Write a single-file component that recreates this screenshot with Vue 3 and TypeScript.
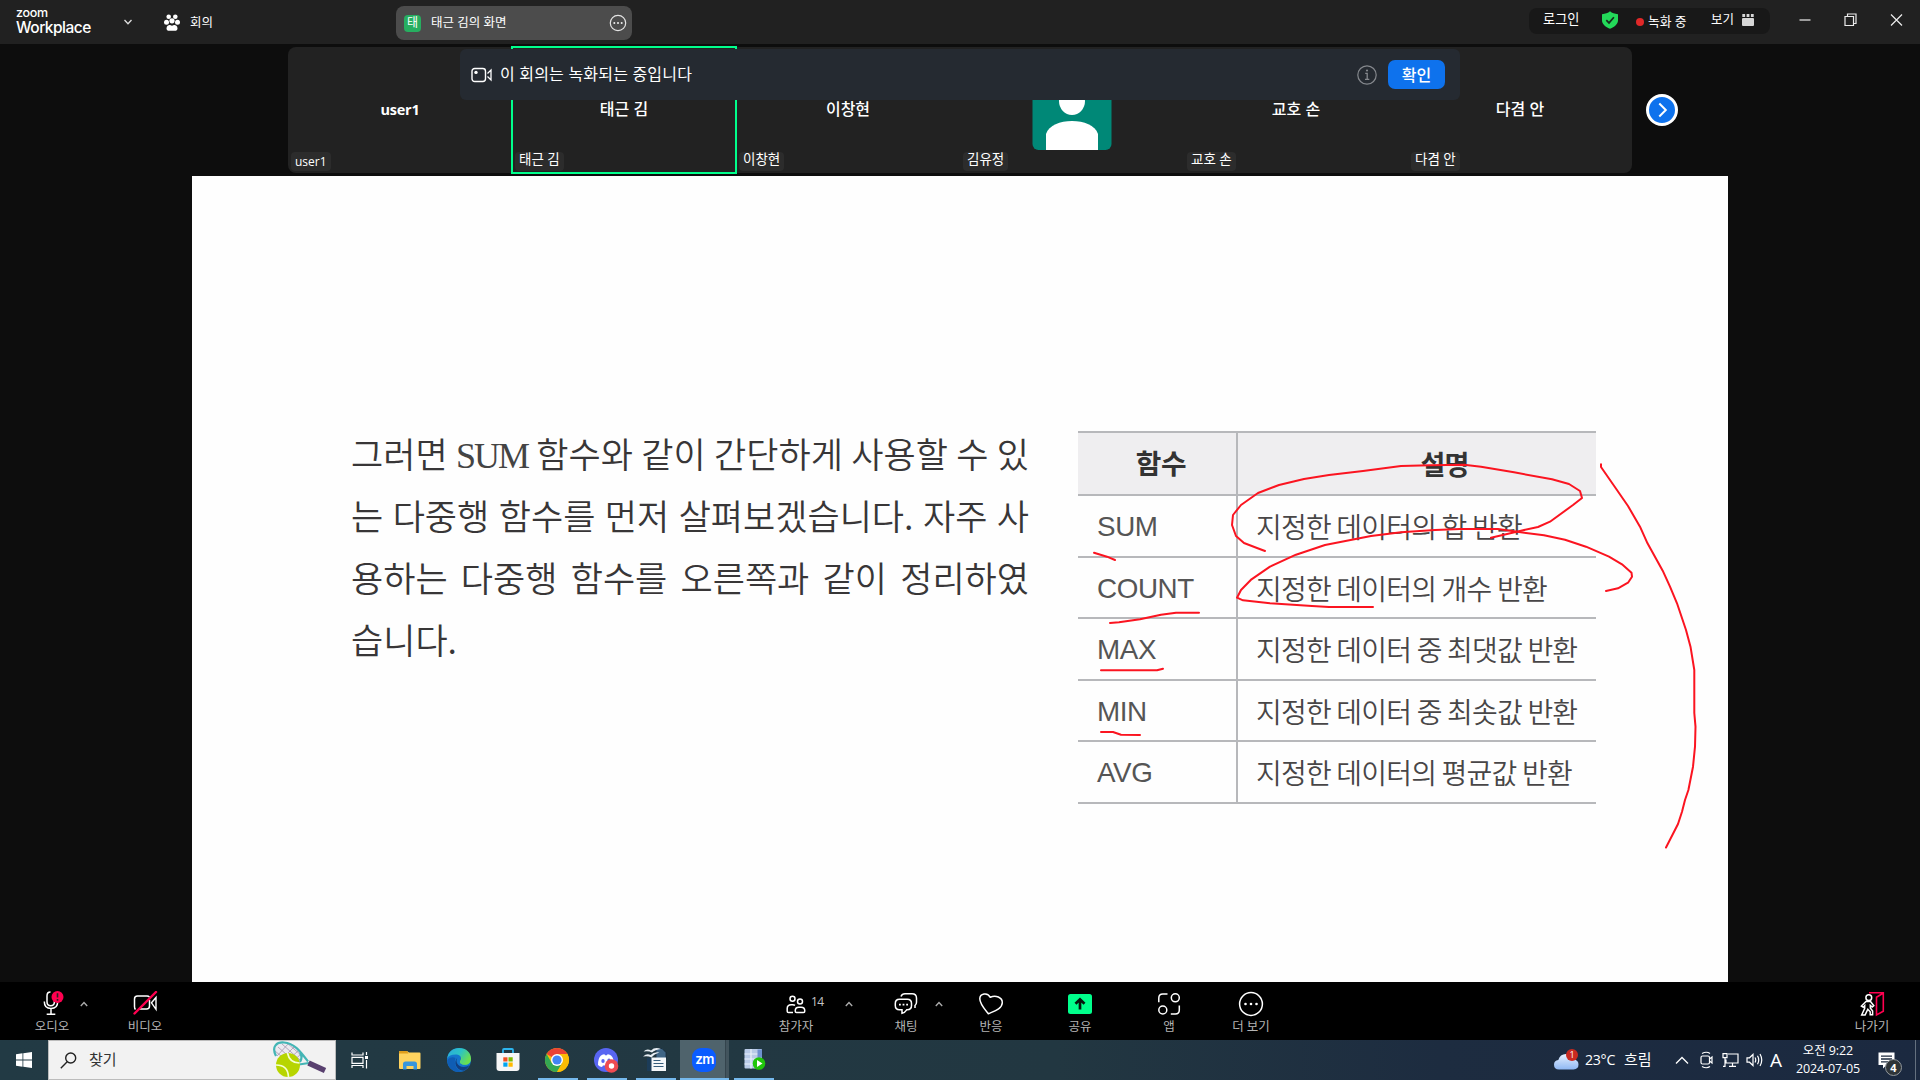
<script setup lang="ts">
interface Tile { name: string; bold?: boolean; active?: boolean; avatar?: boolean }
interface Row { fn: string; desc: string }

const tiles: Tile[] = [
  { name: 'user1', bold: true },
  { name: '태근 김', active: true },
  { name: '이창현' },
  { name: '김유정', avatar: true },
  { name: '교호 손' },
  { name: '다겸 안' },
]
const rows: Row[] = [
  { fn: 'SUM', desc: '지정한 데이터의 합 반환' },
  { fn: 'COUNT', desc: '지정한 데이터의 개수 반환' },
  { fn: 'MAX', desc: '지정한 데이터 중 최댓값 반환' },
  { fn: 'MIN', desc: '지정한 데이터 중 최솟값 반환' },
  { fn: 'AVG', desc: '지정한 데이터의 평균값 반환' },
]
const strokes: string[] = [
  '1265,551 1257,548 1244,543 1236,536 1232,525 1233,515 1241,505 1258,493 1279,485 1304,479 1329,475 1363,471 1401,466 1430,465.3 1464,464.7 1481,466.7 1514,472.3 1552,479.3 1569,484 1580,491 1582,498 1573,505 1550,521.7 1538,527 1521,530.7 1491,537.7',
  '1606,591 1618,588.3 1628,582.7 1632,576.7 1631.5,572.7 1622,564.3 1609,556.7 1586,546.7 1565,539.7 1544,535.3 1519,532 1498,529 1460,529 1435,530 1401,532.3 1371,536 1325,545 1296,554.7 1270,566.7 1251.5,579.3 1241,590 1237,597.7 1243,600.3 1270,603.3 1312,606 1329,607 1373,607',
  '1094,552.7 1107,556.7 1115,560',
  '1110,623 1119,622.300 1140,619.3 1161,614.7 1176,612.7 1199,612.7',
  '1101,670.3 1157,670.3 1163,668.7',
  '1101,732 1113,732 1121,734.7 1140,735',
  '1601,464.3 1601,467 1614.7,486.7 1628,506 1640,526.7 1647.5,543.3 1662.7,570.7 1670,586.7 1677,603.3 1686,630 1690.5,646.7 1694.3,670 1694.3,713 1695.5,726.7 1695,746.7 1693,766.7 1688.4,790 1685,800 1682,811.7 1678,824 1666,847.5',
]
</script>

<template>
  <div class="screen">
    <header class="titlebar">
      <div class="brand"><span class="zoom">zoom</span><span class="wp">Workplace</span></div>
      <svg class="brand-chev" width="10" height="8" viewBox="0 0 10 8"><path d="M1.5 2 5 5.8 8.5 2" fill="none" stroke="#ddd" stroke-width="1.3" /></svg>
      <svg class="paw" width="16" height="18" viewBox="0 0 16 18" fill="#fff"><circle cx="4.7" cy="2.8" r="2.3" /><circle cx="11.3" cy="2.8" r="2.3" /><circle cx="8" cy="6.8" r="2.6" /><circle cx="2.5" cy="8.2" r="2.5" /><circle cx="13.5" cy="8.2" r="2.5" /><path d="M2.5 14.4c0-2.4 2-3.3 3-3.3.9 0 1.300.7 2.500.7s1.600-.7 2.500-.7c1 0 3 .9 3 3.300 0 1.800-1.200 2.300-2.500 2.300h-6c-1.300 0-2.500-.5-2.500-2.300z" /></svg>
      <span class="tab">회의</span>
      <div class="share-tab">
        <span class="share-badge">태</span>
        <span class="share-name">태근 김의 화면</span>
        <svg width="18" height="18" viewBox="0 0 18 18"><circle cx="9" cy="9" r="7.7" fill="none" stroke="#e4e4e4" stroke-width="1.200" /><circle cx="5.300" cy="9" r="1" fill="#eee" /><circle cx="9" cy="9" r="1" fill="#eee" /><circle cx="12.700" cy="9" r="1" fill="#eee" /></svg>
      </div>
      <div class="status">
        <span class="login">로그인</span>
        <svg class="shield" width="18" height="18" viewBox="0 0 18 18"><path d="M9 .3c2 1.700 4.700 2.700 8 2.900v6.300c0 4.200-4.600 6.900-8 8.300-3.400-1.400-8-4.100-8-8.300V3.200C4.300 3 7 2 9 .3z" fill="#23d959" /><path d="M5.300 9.200l2.700 2.700 4.900-5.700" fill="none" stroke="#162b1c" stroke-width="1.700" /></svg>
        <i class="rec-dot"></i>
        <span class="rec">녹화 중</span>
        <span class="view">보기</span>
        <svg class="view-ic" width="12" height="12" viewBox="0 0 12 12" fill="#d6d6d6"><rect x="0" y="4" width="12" height="8" rx="1" /><rect x=".3" y="0" width="2.800" height="3" /><rect x="4.600" y="0" width="2.800" height="3" /><rect x="8.900" y="0" width="2.800" height="3" /></svg>
      </div>
      <div class="winbtns">
        <svg width="12" height="14" viewBox="0 0 12 14"><path d="M.5 7h11" stroke="#bdbdbd" stroke-width="1.600" /></svg>
        <svg width="13" height="14" viewBox="0 0 13 14"><path d="M1 3.500h8.500v9H1zM3.500 3.500V1H12v9.500H9.500" fill="none" stroke="#ececec" stroke-width="1.200" /></svg>
        <svg width="13" height="14" viewBox="0 0 13 14"><path d="M1 1.500l11 11M12 1.500l-11 11" stroke="#ececec" stroke-width="1.200" /></svg>
      </div>
    </header>

    <section class="gallery">
      <div class="strip">
        <div v-for="t in tiles" :key="t.name" class="tile" :class="{ active: t.active }">
          <svg v-if="t.avatar" class="avatar" width="80" height="80" viewBox="0 0 80 80"><rect x=".5" width="79" height="80" rx="6" fill="#008877" /><ellipse cx="40" cy="31" rx="13" ry="14" fill="#fff" /><path d="M14 80V64c3-9 14-13 26-13s23 4 26 13v16z" fill="#fff" /></svg>
          <span v-else class="tname" :class="{ bold: t.bold }">{{ t.name }}</span>
          <span class="tlabel" :class="{ latin: t.bold }">{{ t.name }}</span>
        </div>
        <div class="banner">
          <svg width="22" height="16" viewBox="0 0 22 16"><rect x="1" y="1.500" width="13.500" height="13" rx="2.700" fill="none" stroke="#fff" stroke-width="1.400" /><circle cx="5" cy="5.400" r="1.700" fill="#fff" /><path d="M16.500 6.500 20 3v10l-3.500-3.500" fill="none" stroke="#fff" stroke-width="1.300" /></svg>
          <span class="bmsg">이 회의는 녹화되는 중입니다</span>
          <svg width="20" height="20" viewBox="0 0 20 20"><circle cx="10" cy="10" r="9.200" fill="none" stroke="#85888d" stroke-width="1.200" /><path d="M8.200 8.300H10.200V14M8 14.300h4.300" fill="none" stroke="#85888d" stroke-width="1.300" /><circle cx="10" cy="5.500" r="1.100" fill="#85888d" /></svg>
          <span class="ok">확인</span>
        </div>
      </div>
      <svg class="next" width="32" height="32" viewBox="0 0 32 32"><circle cx="16" cy="16" r="14.500" fill="#0e72ed" stroke="#fff" stroke-width="3" /><path d="M13.300 9.500l6.500 6.500-6.500 6.500" fill="none" stroke="#fff" stroke-width="2" /></svg>
    </section>

    <main class="slide">
      <div class="para">
        <p>그러면 <span class="serif">SUM</span> 함수와 같이 간단하게 사용할 수 있</p>
        <p>는 다중행 함수를 먼저 살펴보겠습니다. 자주 사</p>
        <p>용하는 다중행 함수를 오른쪽과 같이 정리하였</p>
        <p class="last">습니다.</p>
      </div>
      <div class="table">
        <div class="tr head"><span class="c1">함수</span><span class="c2">설명</span></div>
        <div v-for="r in rows" :key="r.fn" class="tr"><span class="c1">{{ r.fn }}</span><span class="c2">{{ r.desc }}</span></div>
      </div>
    </main>
    <svg class="ink" width="1920" height="1080" viewBox="0 0 1920 1080"><polyline v-for="(s, i) in strokes" :key="i" :points="s" /></svg>

    <nav class="toolbar">
      <div class="tool" style="--w: 64px; --m: 20px">
        <svg width="24" height="26" viewBox="0 0 24 26"><g transform="translate(0 -2)"><path d="M10.500 3c-2.500 0-3.500 1.500-3.500 3.700v6c0 2.500 1.300 4 3.700 4s3.700-1.500 3.700-4V10" fill="none" stroke="#fff" stroke-width="1.500" /><path d="M4.300 12.500c0 4.500 2.700 7 6.700 7s6.700-2.500 6.700-7M11 19.500v5M6.700 25.200h8.600" fill="none" stroke="#fff" stroke-width="1.500" /><circle cx="17.500" cy="8" r="6" fill="#ff0050" /><path d="M17.500 4.300v4.200M17.500 10v1.700" stroke="#222" stroke-width="1.600" /></g></svg>
        <span>오디오</span>
      </div>
      <svg class="up" width="8" height="6" viewBox="0 0 8 6"><path d="M.8 5 4 1.500 7.200 5" /></svg>
      <div class="tool" style="--w: 64px; --m: 25px">
        <svg width="26" height="26" viewBox="0 0 26 26"><path d="M3.500 18.500q-1-1-1-3V8q0-3 3-3h9.500q1.500 0 2.500 1M17.500 9v6q0 3-3 3H7" fill="none" stroke="#fff" stroke-width="1.500" /><path d="M19.500 11.800 24 6.500v11.800z" fill="none" stroke="#fff" stroke-width="1.400" /><path d="M2.500 22.500 24 1" stroke="#ff0050" stroke-width="2.400" stroke-linecap="round" /></svg>
        <span>비디오</span>
      </div>
      <div class="tool people" style="--w: 64px; --m: 587px">
        <svg width="20" height="26" viewBox="0 0 20 26" fill="none" stroke="#fff" stroke-width="1.500"><circle cx="6.500" cy="7.800" r="2.500" /><circle cx="14" cy="10.500" r="2.500" /><path d="M7 21.500H2.500q-1.300 0-1.300-1.300v-2.700q0-3.800 4-3.800h1.500q1.500 0 2.300.6" /><path d="M10.500 21.500q-1.300 0-1.300-1.500 0-3.700 3.700-3.700h2.200q3.700 0 3.700 3.700 0 1.500-1.300 1.500z" /></svg>
        <span>참가자</span>
        <b class="count">14</b>
      </div>
      <svg class="up" style="margin-left: 17px" width="8" height="6" viewBox="0 0 8 6"><path d="M.8 5 4 1.500 7.200 5" /></svg>
      <div class="tool" style="--w: 64px; --m: 21px">
        <svg width="26" height="26" viewBox="0 0 26 26" fill="none" stroke="#fff" stroke-width="1.500"><path d="M8 5.500Q9 2.800 12 2.800h7q4.500 0 4.500 4.500v4q0 2-1.500 3.200v2.500" /><path d="M6.500 8.300h7.800q4.200 0 4.200 4.300v2q0 4.200-4.200 4.200h-.6q-2 3-4.700 3.500V18.800H6.500q-4.200 0-4.200-4.200v-2q0-4.300 4.200-4.300z" /><path d="M6 13.700h1.800M9.600 13.700h1.800M13.200 13.700H15" stroke-width="1.800" /></svg>
        <span>채팅</span>
      </div>
      <svg class="up" style="margin-left: -3px" width="8" height="6" viewBox="0 0 8 6"><path d="M.8 5 4 1.500 7.200 5" /></svg>
      <div class="tool" style="--w: 64px; --m: 16px">
        <svg width="26" height="26" viewBox="0 0 26 26"><path d="M10.300 22.700C6 17.500 1.800 13 1.800 7.800 1.800 2.500 9.500.8 12.300 6.300 17.500 3.800 24.500 6.300 24.300 11.800 24.100 18 16 20.200 10.300 22.700z" fill="none" stroke="#fff" stroke-width="1.500" stroke-linejoin="round" /></svg>
        <span>반응</span>
      </div>
      <div class="tool" style="--w: 64px; --m: 25px">
        <svg width="26" height="26" viewBox="0 0 26 26"><rect x="1" y="3" width="24" height="20" rx="2.500" fill="#00ff8c" /><path d="M13 18.500V9M8.500 12.800 13 8.300l4.500 4.500" fill="none" stroke="#06150d" stroke-width="2.700" /></svg>
        <span>공유</span>
      </div>
      <div class="tool" style="--w: 64px; --m: 25px">
        <svg width="26" height="26" viewBox="0 0 26 26" fill="none" stroke="#fff" stroke-width="1.500"><circle cx="19.300" cy="6.800" r="4" /><circle cx="6.800" cy="19" r="4" /><path d="M2.800 11.300V7q0-4 4-4h4.700M23.300 14.500V19q0 4-4 4h-4.500" /></svg>
        <span>앱</span>
      </div>
      <div class="tool" style="--w: 64px; --m: 18px">
        <svg width="26" height="26" viewBox="0 0 26 26"><circle cx="13" cy="13" r="11.400" fill="none" stroke="#fff" stroke-width="1.500" /><circle cx="7.500" cy="13" r="1.300" fill="#fff" /><circle cx="13" cy="13" r="1.300" fill="#fff" /><circle cx="18.500" cy="13" r="1.300" fill="#fff" /></svg>
        <span>더 보기</span>
      </div>
      <div class="tool leave" style="--w: 64px">
        <svg width="26" height="26" viewBox="0 0 26 26" fill="none"><path d="M10 1.700H24.300v18.500L17.500 24V6.200L24 2.200" stroke="#ff0050" stroke-width="1.600" /><circle cx="9.800" cy="6.700" r="2.900" stroke="#fff" stroke-width="1.500" /><path d="M7 10.500h4.500l3.300 4.200-1.600 1.400-1.900-1.700v2.700l2.300 2.800v3.800h-2.400v-3l-2.400-2.500-2.700 5.700H2.700l3-6.500v-2.700l-1.400 1.500-1.900-1.200z" stroke="#fff" stroke-width="1.500" /></svg>
        <span>나가기</span>
      </div>
    </nav>

    <footer class="taskbar">
      <div class="start"><svg width="16" height="16" viewBox="0 0 16 16" fill="#fff"><path d="M0 2.200 6.500 1.300v6.300H0zM7.300 1.200 16 0v7.600H7.300zM0 8.400h6.500v6.300L0 13.800zM7.300 8.400H16V16l-8.700-1.200z" /></svg></div>
      <div class="search">
        <svg width="17" height="17" viewBox="0 0 17 17" fill="none" stroke="#222" stroke-width="1.400"><circle cx="10.700" cy="6" r="5" /><path d="M7.200 9.800.8 16.200" /></svg>
        <span>찾기</span>
        <svg class="racket" width="56" height="38" viewBox="0 0 56 38">
          <path d="M3 8Q5 1 13 1.800C22 2 30 9 31 16q-2 6-9 5Q6 20 3 8z" fill="#eceaf0" />
          <path d="M6 6l17 15M10 3l18 16M15 2l14 12M3 10l12 10M5 15 17 2M9 19 23 5M14 21l13-12M20 21l9-8" stroke="#a695ad" stroke-width=".8" />
          <path d="M4 15C-1 5 5 1 12 1.500 22 2 28 10 36 20.500M28 12q3 4 0 9" stroke="#43b5b5" stroke-width="2.200" fill="none" /><path d="M27 23.500l10-1.500" stroke="#43b5b5" stroke-width="2" fill="none" />
          <path d="M36.500 22 53 29.500" stroke="#59406f" stroke-width="5.500" />
          <circle cx="16" cy="24" r="12" fill="#b7d500" /><path d="M4 24q12 0 12.500 12M15.500 12q2 10 12 10" fill="none" stroke="#f5ffcf" stroke-width="1.700" />
        </svg>
      </div>
      <div class="app"><svg width="18" height="18" viewBox="0 0 18 18" fill="none" stroke="#fff" stroke-width="1.200"><path d="M1 1.500V4h11V1.500M1 17v-2.500h11V17M1 6.300h11v6H1zM15.500 1v3M15.500 9v8.500" /><path d="M14 6.500h3" stroke-width="3" /></svg></div>
      <div class="app"><svg width="24" height="24" viewBox="0 0 24 24"><path d="M1 4q0-1 1-1h7l2 1.500h10.500q1 0 1 1V20q0 1-1 1H2q-1 0-1-1z" fill="#ffd35f" /><path d="M1 4q0-1 1-1h7l1.500 2.500H1z" fill="#e09e1c" /><path d="M5 21.500v-5.500q0-2.500 2.500-2.500h9q2.500 0 2.500 2.500v5.500h-3.500v-3.500h-7v3.500z" fill="#3996dc" /></svg></div>
      <div class="app"><svg width="26" height="26" viewBox="0 0 26 26"><defs><linearGradient id="eg" x1="0" y1="0" x2="1" y2=".5"><stop offset="0" stop-color="#2aa8df" /><stop offset=".55" stop-color="#2cc3c5" /><stop offset="1" stop-color="#6adf50" /></linearGradient></defs><circle cx="13" cy="13" r="12" fill="#1475cc" /><path d="M14 14c1-1 1.500-3 .5-4.500l10 1.500q.8 5-3 6.500-4 1-7-1-1-.8-.5-2.500z" fill="#5bd96b" /><path d="M1.200 11.500C2 5 7 1 13 1c7.500 0 12 5 12 10.500 0 4-3 6-6.500 6-2.500 0-3.800-.9-3.800-1.800 0-.8 1.300-1 1.300-3C16 9.500 13 7.500 9.500 7.500c-4 0-7.200 1.500-8.300 4z" fill="url(#eg)" /><path d="M9.500 11C7.500 16 10 24 17 24c-8 3-15-2-15.800-10.500C3.500 10 7 9.500 9.500 11z" fill="#0f5db4" /><path d="M11.500 10.500c-2.800 4 .5 9.500 6 9.500 2.500 0 4.500-.7 6.200-2-1.700 3-4 5-6.200 5.700C10 23.500 7 15 11.500 10.500z" fill="#123f81" /></svg></div>
      <div class="app"><svg width="24" height="26" viewBox="0 0 24 26"><path d="M7 6V3q0-1 1-1h8q1 0 1 1v3" fill="none" stroke="#2db5ee" stroke-width="1.800" /><path d="M.5 6h23v15q0 3-3 3h-17q-3 0-3-3z" fill="#f6f6f6" /><path d="M7.300 10.300h4.200v4.200H7.300z" fill="#f25022" /><path d="M12.500 10.300h4.200v4.200h-4.200z" fill="#7fba00" /><path d="M7.300 15.500h4.200v4.200H7.300z" fill="#00a4ef" /><path d="M12.500 15.500h4.200v4.200h-4.200z" fill="#ffb900" /></svg></div>
      <div class="app run"><svg width="26" height="26" viewBox="0 0 26 26"><circle cx="13" cy="13" r="12" fill="#fbbc05" /><path d="M13 13 2.600 7A12 12 0 0 1 23.400 7H13z" fill="#ea4335" /><path d="M2.600 7A12 12 0 0 0 13 25l5.200-9L7.800 16z" fill="#34a853" /><path d="M13 7H23.400A12 12 0 0 1 13 25l5.200-9z" fill="#fbbc05" /><circle cx="13" cy="13" r="6" fill="#fff" /><circle cx="13" cy="13" r="4.600" fill="#4285f4" /></svg></div>
      <div class="app run"><svg width="26" height="26" viewBox="0 0 26 26"><circle cx="13" cy="13" r="12" fill="#5865f2" /><path d="M5 18q0-7 3-9.500 2-1.200 3.500-1.200l.5 1h2l.5-1Q16 7.300 18 8.500q3 2.500 3 9.500-2 1.800-4 2l-1-1.600H10L9 20q-2-.2-4-2z" fill="#fff" /><ellipse cx="10" cy="14" rx="1.700" ry="2" fill="#5865f2" /><ellipse cx="16" cy="13.500" rx="1.700" ry="2" fill="#5865f2" /><circle cx="18.500" cy="19" r="6.800" fill="#ef4b52" /><circle cx="18.500" cy="19" r="2.700" fill="#fff" /></svg></div>
      <div class="app run"><svg width="26" height="26" viewBox="0 0 26 26"><path d="M5 11h5v13H5z" fill="#1c3c58" /><path d="M14 1.500h6l4 4V12H14z" fill="#3f6585" stroke="#16293a" stroke-width=".8" /><path d="M9.500 10.500H24V24H9.500z" fill="#f4f7f9" /><path d="M11.500 13.500h7M11.500 16.500h10M11.500 19.500h10" stroke="#355c7b" stroke-width="1.200" /><path d="M1.500 4.500Q5 1 9 3.500 13-.5 19 2q-6 .5-9 3.500-3.500-2-8.500-1z" fill="#e8eef3" /><path d="M1 9.500Q5 6 8.500 8 12 4.500 17.500 5.500 12 7 9.500 10.500 6 8.500 1 9.500z" fill="#e8eef3" /></svg></div>
      <div class="app run current"><span class="zm">zm</span></div>
      <div class="app run"><svg width="24" height="26" viewBox="0 0 24 26"><rect x="2.500" y="2" width="17.500" height="19.500" rx="1" fill="#b9cbe8" /><path d="M2.500 7h17.500M2.500 12h17.500M2.500 17h17.500M9 2v19.500" stroke="#e9f1fb" stroke-width="1.200" /><path d="M15.500 2.500H20v8h-4.500z" fill="#6e91cf" /><circle cx="17" cy="16.500" r="6.300" fill="#20c60b" /><path d="M15 13v7l5.500-3.500z" fill="#fff" /></svg></div>

      <div class="tray">
        <svg width="28" height="24" viewBox="0 0 28 24"><defs><linearGradient id="cl" x1="0" y1="0" x2="0" y2="1"><stop offset="0" stop-color="#e7f1ff" /><stop offset="1" stop-color="#8fb8f4" /></linearGradient></defs><path d="M6 21.500q-5 0-5-4.700 0-4.300 4.300-4.700Q7 6 13 6t7.500 5.500Q25.500 12 25.500 16.500t-5 5z" fill="url(#cl)" /><circle cx="19" cy="7" r="6" fill="#c92a20" /><text x="19" y="10.300" font-size="9" text-anchor="middle" fill="#fff" font-family="Open Sans, sans-serif">1</text></svg>
        <span class="temp">23°C</span><span class="wx">흐림</span>
        <svg class="t-up" width="14" height="10" viewBox="0 0 14 10"><path d="M1 8.500 7 2.500l6 6" fill="none" stroke="#fff" stroke-width="1.300" /></svg>
        <svg class="t-meet" width="14" height="18" viewBox="0 0 14 18" fill="none" stroke="#fff" stroke-width="1.200"><rect x="1" y="5" width="8.500" height="8" rx="1.500" /><path d="M9.500 8 12 6v6L9.500 10M2 2.500q4.500-2.500 8 0M2 15.500q4.500 2.500 8 0" /></svg>
        <svg class="t-mon" width="17" height="16" viewBox="0 0 17 16" fill="none" stroke="#fff" stroke-width="1.200"><path d="M6 2h10v9H4V7.500M7 14.300h7M10.500 11v3M1 1.600h4v4H1zM3 5.600V14.300H1" /></svg>
        <svg class="t-vol" width="17" height="16" viewBox="0 0 17 16" fill="none" stroke="#fff" stroke-width="1.200"><path d="M1 5.800h2.500L7 2.500v11L3.500 10.200H1zM9 5.500q1.500 2.500 0 5M11.500 3.700q2.500 4.300 0 8.600M14 2q3.500 6 0 12" /></svg>
        <span class="ime">A</span>
        <div class="clock"><span>오전 9:22</span><span>2024-07-05</span></div>
        <div class="note">
          <svg width="17" height="17" viewBox="0 0 17 17"><path d="M.5.500h16V13H8.500L5 16.500V13H.5z" fill="#fff" /><path d="M3 4.200h11M3 7h11M3 9.800h7" stroke="#1d2b3f" stroke-width="1.300" /></svg>
          <b>4</b>
        </div>
        <i class="peek"></i>
      </div>
    </footer>
  </div>
</template>

<style>
body { margin: 0; background: #0d0d0d; overflow: hidden; }
</style>

<style scoped>
* { box-sizing: border-box; }
.screen { width: 1920px; height: 1080px; background: #0d0d0d; display: flex; flex-direction: column; position: relative; overflow: hidden; color: #fff; font-family: "Open Sans", "Noto Sans CJK KR", sans-serif; white-space: nowrap; }
svg { display: block; flex: none; }
span { flex: none; }

.titlebar { height: 44px; flex: none; background: #212121; display: flex; font-size: 12.5px; line-height: 18px; }
.brand { width: 76px; margin: 7px 0 0 16px; display: flex; flex-direction: column; }
.zoom { font: 500 12.5px/12px "Inter", sans-serif; letter-spacing: -.3px; }
.wp { font: 500 15.5px/17px "Inter", sans-serif; letter-spacing: -.5px; }
.brand-chev { margin: 18px 0 0 31px; }
.paw { margin: 14px 0 0 31px; }
.tab { margin: 14px 0 0 10px; width: 24px; }
.share-tab { width: 236px; height: 34px; margin: 6px 0 0 182px; background: #4c4c4c; border-radius: 8px; display: flex; align-items: center; padding: 0 5px 0 8px; }
.share-badge { width: 17px; height: 17px; border-radius: 4px; background: #27ae60; font-size: 12px; line-height: 15px; text-align: center; }
.share-name { margin: 0 auto 0 10px; }
.status { width: 241px; height: 26px; margin: 8px 0 0 897px; background: #181818; border-radius: 8px; display: flex; }
.login { margin: 2px 0 0 14px; width: 39px; font-size: 13.2px; }
.shield { margin: 3px 0 0 19px; }
.rec-dot { width: 8px; height: 8px; border-radius: 50%; background: #e02828; margin: 10px 0 0 17px; }
.rec { margin: 4px 0 0 4px; width: 38px; font-size: 12.8px; }
.view { margin: 3px 0 0 25px; width: 24px; }
.view-ic { margin: 6px 0 0 7px; }
.winbtns { display: flex; gap: 33px; margin: 13px 0 0 29px; }

.gallery { height: 132px; flex: none; display: flex; padding: 3px 0 0 288px; }
.strip { width: 1344px; height: 126px; background: #222; border-radius: 8px; display: flex; position: relative; }
.tile { width: 224px; height: 126px; display: flex; align-items: center; justify-content: center; position: relative; }
.tile.active::after { content: ""; position: absolute; inset: -1px -1px -1px -1px; border: 2px solid #00ff8c; }
.tname { font-size: 16px; line-height: 22px; font-weight: 500; margin-top: -3px; }
.tname.bold { font-size: 14.500px; font-weight: 700; margin-top: 0; letter-spacing: -.2px; }
.avatar { margin-top: 0; }
.tlabel { position: absolute; left: 3px; bottom: 2px; height: 19px; padding: 0 4px; border-radius: 4px; background: #2c2c2c; font-size: 13.500px; line-height: 15px; }
.tlabel.latin { font-size: 12px; line-height: 20px; }
.banner { position: absolute; left: 172px; top: 2px; width: 1000px; height: 51px; border-radius: 6px; background: #252a31; display: flex; align-items: center; padding: 0 15px 0 11px; }
.bmsg { font-size: 16px; letter-spacing: .2px; margin: 0 auto 4px 7px; }
.ok { width: 57px; height: 29px; margin-left: 11px; border-radius: 7px; background: #0e72ed; text-align: center; font-size: 16px; line-height: 28px; font-weight: 500; padding-top: 1px; }
.next { margin: 47px 0 0 14px; }

.slide { width: 1536px; height: 806px; flex: none; margin-left: 192px; background: #fefefe; display: flex; align-items: flex-start; color: #333; }
.para { width: 678px; margin: 246px 0 0 159px; font: 350 35px/62px "Noto Sans CJK KR", sans-serif; color: #383637; }
.para p { margin: 0; height: 62px; text-align-last: justify; }
.para p.last { text-align-last: left; }
.serif { font-family: "Liberation Serif", serif; font-size: 36px; letter-spacing: -2px; color: #444; }
.table { width: 518px; margin: 255px 0 0 49px; border-top: 2px solid #b7b8bb; }
.tr { display: flex; height: 61.500px; border-bottom: 2px solid #b7b8bb; font: 350 28px/60px "Liberation Sans", "Noto Sans CJK KR", sans-serif; color: #484647; }
.tr.head { height: 63px; background: #efeef0; font-weight: 700; font-size: 27px; line-height: 63px; color: #333; }
.c1 { width: 160px; padding-left: 19px; border-right: 2px solid #b7b8bb; font-size: 27.800px; line-height: 62px; letter-spacing: -.4px; color: #555; }
.c2 { padding-left: 18px; font-family: "Noto Sans CJK KR", sans-serif; letter-spacing: -.8px; }
.head .c1, .head .c2 { text-align: center; padding: 0; color: #333; line-height: 63px; }
.head .c1 { padding-left: 8px; }
.head .c2 { width: 358px; padding-left: 55px; line-height: 62px; }
.ink { position: absolute; left: 0; top: 0; pointer-events: none; }
.ink polyline { fill: none; stroke: #fb1420; stroke-width: 2; stroke-linejoin: round; stroke-linecap: round; }

.toolbar { height: 58px; flex: none; background: #000; display: flex; }
.tool { width: var(--w); margin-left: var(--m); display: flex; flex-direction: column; align-items: center; position: relative; padding-top: 9px; flex: none; }
.tool span { font-size: 12.500px; line-height: 16px; color: #b4b4b4; margin-top: 2px; }
.tool.leave { margin-left: auto; margin-right: 16px; }
.up { margin-top: 19px; margin-left: -4px; fill: none; stroke: #aaa; stroke-width: 1.400; }
.count { position: absolute; left: 47px; top: 12px; font: 400 12px/16px "Open Sans", sans-serif; letter-spacing: -.6px; color: #c4c4c4; }

.taskbar { height: 40px; flex: none; display: flex; background: linear-gradient(90deg, #223a44, #223741 55%, #1d2c40 75%, #1b2940); }
.start { width: 48px; display: flex; align-items: center; justify-content: center; }
.search { width: 288px; background: #f2f2f2; border: 1px solid #bcbcbc; color: #333; display: flex; align-items: center; padding-left: 11px; font-size: 15px; margin-right: -1px; }
.search span { margin: 0 auto 3px 12px; }
.racket { margin-right: 7px; }
.app { width: 49px; height: 40px; display: flex; align-items: center; justify-content: center; position: relative; flex: none; margin-right: .15px; }
.search + .app { width: 50px; }
.app.run::after { content: ""; position: absolute; left: 5px; right: 4px; bottom: 0; height: 2px; background: #76b9ed; }
.app.current { background: linear-gradient(90deg, #4f636c 45px, #34444d 45px, #34444d 46px, #42545d 46px); }
.app.current::after { left: 0; right: 0; }
.zm { width: 24px; height: 24px; border-radius: 9px; background: #0b5cff; font: 600 13.5px/22px "Inter", sans-serif; text-align: center; letter-spacing: -.6px; }
.tray { margin-left: auto; display: flex; align-items: center; font-size: 14.500px; }
.temp { width: 33px; margin: -1px 0 0 4px; font-size: 14.200px; letter-spacing: -.3px; }
.wx { margin: -3px 0 0 6px; width: 28px; font-size: 15px; }
.t-up { margin-left: 23px; }
.t-meet { margin-left: 11px; }
.t-mon { margin-left: 8px; }
.t-vol { margin-left: 7px; }
.ime { font-size: 19px; width: 12px; margin-left: 7px; }
.clock { width: 70px; margin-left: 11px; display: flex; flex-direction: column; text-align: center; font-size: 12.500px; line-height: 18px; letter-spacing: -.1px; }
.note { margin-left: 15px; width: 26px; height: 40px; padding-top: 12px; position: relative; }
.note b { position: absolute; left: 7px; top: 19px; width: 17px; height: 17px; border-radius: 50%; background: #2e3438; border: 1px solid #92989d; font-size: 11px; line-height: 15px; text-align: center; }
.peek { width: 1px; height: 40px; background: #64707f; margin: 0 4px 0 11px; }
</style>
